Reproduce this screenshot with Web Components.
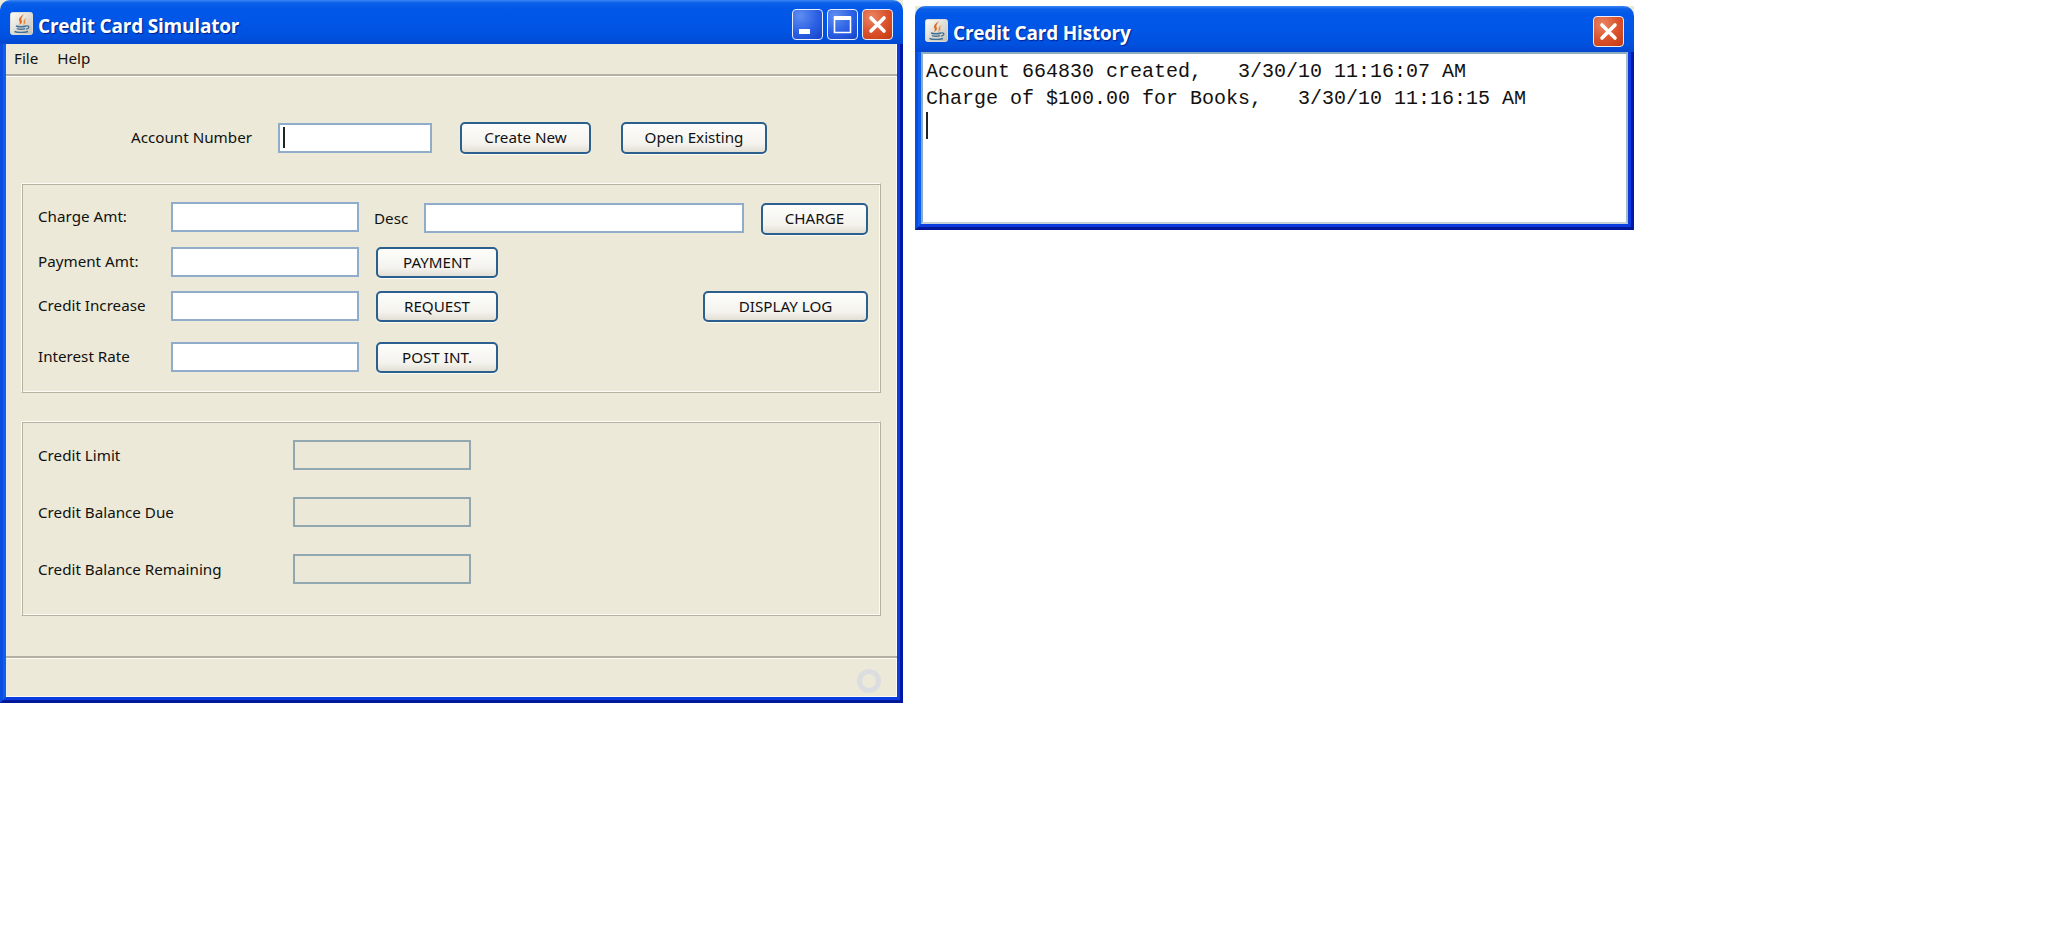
<!DOCTYPE html>
<html>
<head>
<meta charset="utf-8">
<title>Credit Card Simulator</title>
<style>
  html, body { margin: 0; height: 100%; background: #fff; }
  body { font: 15.2px "Noto Sans", "Liberation Sans", sans-serif; color: #111; }
  #simulator { left: 0; top: 0; width: 903px; height: 703px; }
  #history { left: 915px; top: 6px; width: 719px; height: 224px; }
</style>
</head>
<body>
<xp-window id="simulator" title="Credit Card Simulator" controls="all" bar="44">
  <xp-menubar><span>File</span><span>Help</span></xp-menubar>
  <account-row></account-row>
  <charge-panel></charge-panel>
  <balance-panel></balance-panel>
  <status-strip></status-strip>
</xp-window>
<xp-window id="history" title="Credit Card History" controls="close" bar="46">
  <log-view>Account 664830 created,   3/30/10 11:16:07 AM
Charge of $100.00 for Books,   3/30/10 11:16:15 AM</log-view>
</xp-window>

<script>
class JavaIcon extends HTMLElement {
  constructor() {
    super();
    this.attachShadow({ mode: "open" });
    this.shadowRoot.innerHTML = `
      <style>
        :host { display: block; width: 23px; height: 23px; flex: none; margin-top: -3px; }
        svg { display: block; }
      </style>
      <svg width="23" height="23" viewBox="0 0 23 23">
        <defs>
          <linearGradient id="bg" x1="0" y1="0" x2="1" y2="1">
            <stop offset="0" stop-color="#fdfcf8"/><stop offset="1" stop-color="#c4c1b6"/>
          </linearGradient>
        </defs>
        <rect x=".5" y=".5" width="22" height="22" rx="2" fill="url(#bg)" stroke="#dcdad0"/>
        <path d="M14 2c-3.500 2.500-6 4.500-4.500 7.500.7 1.500.2 2.500-.7 3.500 2.800-1 3.800-2.800 2.700-5C10.700 6.300 12.500 4.200 14 2z" fill="#e06a1e"/>
        <path d="M17 6c-2.500 1-4 2.500-3.300 4.300.3 1-.2 1.800-1 2.700 2.300-.8 3.200-2 2.600-3.700C14.800 8.200 15.700 7 17 6z" fill="#ee8a3c"/>
        <path d="M6 14c2.500.8 7.500.8 10 0M6.800 16.600c2 .6 6.400.6 8.400 0M4.500 19.500c3 1.200 10 1.200 13.500 0" fill="none" stroke="#3f7096" stroke-width="1.400"/>
        <path d="M16 14c3.500-1 4 2.300.2 3.200" fill="none" stroke="#3f7096" stroke-width="1.200"/>
      </svg>`;
  }
}
customElements.define("java-icon", JavaIcon);

class CaptionButton extends HTMLElement {
  constructor() {
    super();
    this.attachShadow({ mode: "open" });
  }
  connectedCallback() {
    const kind = this.getAttribute("kind");
    const glyphs = {
      min: `<rect x="7" y="20" width="11" height="5" fill="#fff"/>`,
      max: `<path d="M7.500 8.500h16v15h-16z" fill="none" stroke="#fff" stroke-width="1.600"/><rect x="7" y="7" width="17" height="4" fill="#fff"/>`,
      close: `<path d="M9 9l13 13M22 9L9 22" stroke="#fff" stroke-width="3.600" stroke-linecap="round"/>`,
    };
    this.shadowRoot.innerHTML = `
      <style>
        :host {
          display: block; width: 31px; height: 31px; box-sizing: border-box;
          border: 1.500px solid #e8eefc; border-radius: 4px; flex: none;
          background: radial-gradient(circle at 25% 20%, #5f8df0, #2a5fe4 55%, #1542c8);
        }
        :host([kind="close"]) {
          background: radial-gradient(circle at 30% 25%, #ea8464, #d9502a 55%, #c23a10);
        }
        svg { display: block; margin: -1.500px; }
      </style>
      <svg width="31" height="31" viewBox="0 0 31 31">${glyphs[kind]}</svg>`;
  }
}
customElements.define("caption-button", CaptionButton);

class XpWindow extends HTMLElement {
  constructor() {
    super();
    this.attachShadow({ mode: "open" });
  }
  connectedCallback() {
    const title = this.getAttribute("title");
    const bar = this.getAttribute("bar");
    const controls = this.getAttribute("controls") === "all"
      ? `<caption-button kind="min"></caption-button><caption-button kind="max"></caption-button><caption-button kind="close"></caption-button>`
      : `<caption-button kind="close"></caption-button>`;
    this.removeAttribute("title");
    this.shadowRoot.innerHTML = `
      <style>
        :host { position: absolute; display: flex; flex-direction: column; background: #ece9d8; }
        .bar {
          height: ${bar}px; flex: none; box-sizing: border-box; display: flex; align-items: center;
          gap: 4px; padding: 5px 10px 0 10px; border-radius: 10px 10px 0 0;
          background: linear-gradient(#3a86f4 0, #0b5fe8 3px, #0058e9 9px, #0055e5 60%, #0050de 85%, #0346d0 100%);
        }
        .name {
          flex: 1; margin-left: 1px; padding-top: 2px; color: #fff;
          font: bold 19px "Open Sans", "Liberation Sans", sans-serif;
          letter-spacing: -.2px; text-shadow: 1px 1px 1px #00208c; white-space: nowrap;
        }
        .frame {
          flex: 1; min-height: 0; display: flex; border-style: solid; border-width: 0 3px 3px 3px;
          border-color: #0a4ee0 #0018a8 #00179a #0a4ee0;
        }
        .frame-in {
          flex: 1; min-width: 0; display: flex; border-style: solid; border-width: 0 3px 3px 3px;
          border-color: #0f5ff0 #0a3ce0 #0a3ce0 #0f5ff0;
        }
        .client { flex: 1; min-width: 0; display: flex; flex-direction: column; box-shadow: inset -1px -1px 0 #fbfaf4; }
      </style>
      <div class="bar">
        <java-icon></java-icon>
        <div class="name">${title}</div>
        ${controls}
      </div>
      <div class="frame"><div class="frame-in"><div class="client"><slot></slot></div></div></div>`;
  }
}
customElements.define("xp-window", XpWindow);

class XpMenubar extends HTMLElement {
  constructor() {
    super();
    this.attachShadow({ mode: "open" });
    this.shadowRoot.innerHTML = `
      <style>
        :host {
          display: flex; height: 28px; padding: 0 0 2px 8px; align-items: center; gap: 19px;
          border-bottom: 2px solid #b4b1a2; box-shadow: 0 1px 0 #fff; flex: none;
        }
      </style>
      <slot></slot>`;
  }
}
customElements.define("xp-menubar", XpMenubar);

class XpButton extends HTMLElement {
  constructor() {
    super();
    this.attachShadow({ mode: "open" });
    this.shadowRoot.innerHTML = `
      <style>
        :host {
          display: flex; align-items: center; justify-content: center; box-sizing: border-box; flex: none;
          height: 32px; padding-bottom: 2px; border: 2px solid #2b5f8e; border-radius: 5px; color: #111;
          white-space: nowrap; background: linear-gradient(#fdfdfb, #f4f3ee 70%, #e2dfd4);
          box-shadow: 0 1px 1px #fbfaf5;
        }
      </style>
      <slot></slot>`;
  }
}
customElements.define("xp-button", XpButton);

class XpField extends HTMLElement {
  constructor() {
    super();
    this.attachShadow({ mode: "open" });
    this.shadowRoot.innerHTML = `
      <style>
        :host {
          display: block; box-sizing: border-box; height: 30px; flex: none; position: relative;
          border: 2px solid #8fadcb; background: #fff;
        }
        :host([readonly]) { background: #ebe8d8; border-color: #92a7b0; }
        :host([caret])::after {
          content: ""; position: absolute; left: 3px; top: 2px; bottom: 3px; width: 2px; background: #222;
        }
      </style>`;
  }
}
customElements.define("xp-field", XpField);

class GroupPanel extends HTMLElement {
  constructor() {
    super();
    this.attachShadow({ mode: "open" });
    this.shadowRoot.innerHTML = `
      <style>
        :host {
          display: block; box-sizing: border-box; width: 860px; margin-left: 15px; flex: none;
          border: 1px solid; border-color: #fbfaf5 #b5b2a3 #b5b2a3 #fbfaf5;
          box-shadow: inset 1px 1px 0 #b5b2a3, inset -1px -1px 0 #fbfaf5;
        }
      </style>
      <slot></slot>`;
  }
}
customElements.define("group-panel", GroupPanel);

class AccountRow extends HTMLElement {
  constructor() {
    super();
    this.attachShadow({ mode: "open" });
    this.shadowRoot.innerHTML = `
      <style>
        :host { display: flex; align-items: center; padding: 46px 0 0 125px; height: 32px; flex: none; }
        .label { width: 147px; padding-bottom: 2px; }
        xp-field { width: 154px; margin-right: 28px; }
        .create { width: 131px; margin-right: 30px; }
        .open { width: 146px; }
      </style>
      <span class="label">Account Number</span>
      <xp-field caret></xp-field>
      <xp-button class="create">Create New</xp-button>
      <xp-button class="open">Open Existing</xp-button>`;
  }
}
customElements.define("account-row", AccountRow);

class ChargePanel extends HTMLElement {
  constructor() {
    super();
    this.attachShadow({ mode: "open" });
    this.shadowRoot.innerHTML = `
      <style>
        :host { display: block; margin-top: 29px; flex: none; }
        group-panel { height: 210px; }
        .grid {
          display: grid; height: 100%; box-sizing: border-box; padding: 18px 13px 0 16px;
          grid-template-rows: 45px 44px 51px 31px;
        }
        .row { display: flex; align-items: flex-start; }
        .label { width: 133px; height: 30px; line-height: 29px; flex: none; }
        .amt { width: 188px; }
        .action { width: 122px; height: 31px; margin-left: 17px; }
        .desc { margin: 1px 0 0 15px; width: 50px; line-height: 30px; }
        .desc-input { width: 320px; margin-top: 1px; }
        .charge { width: 107px; margin: 1px 0 0 17px; }
        .log { width: 165px; height: 31px; margin-left: auto; }
      </style>
      <group-panel>
        <div class="grid">
          <div class="row">
            <span class="label">Charge Amt:</span><xp-field class="amt"></xp-field>
            <span class="desc">Desc</span><xp-field class="desc-input"></xp-field>
            <xp-button class="charge">CHARGE</xp-button>
          </div>
          <div class="row">
            <span class="label">Payment Amt:</span><xp-field class="amt"></xp-field>
            <xp-button class="action">PAYMENT</xp-button>
          </div>
          <div class="row">
            <span class="label">Credit Increase</span><xp-field class="amt"></xp-field>
            <xp-button class="action">REQUEST</xp-button>
            <xp-button class="log">DISPLAY LOG</xp-button>
          </div>
          <div class="row">
            <span class="label">Interest Rate</span><xp-field class="amt"></xp-field>
            <xp-button class="action">POST INT.</xp-button>
          </div>
        </div>
      </group-panel>`;
  }
}
customElements.define("charge-panel", ChargePanel);

class BalancePanel extends HTMLElement {
  constructor() {
    super();
    this.attachShadow({ mode: "open" });
    this.shadowRoot.innerHTML = `
      <style>
        :host { display: block; margin-top: 28px; flex: none; }
        group-panel { height: 195px; }
        .rows {
          display: grid; grid-auto-rows: 30px; row-gap: 27px; padding: 18px 0 0 16px;
        }
        .row { display: flex; align-items: center; }
        .label { width: 255px; flex: none; }
        xp-field { width: 178px; }
      </style>
      <group-panel>
        <div class="rows">
          <div class="row"><span class="label">Credit Limit</span><xp-field readonly></xp-field></div>
          <div class="row"><span class="label">Credit Balance Due</span><xp-field readonly></xp-field></div>
          <div class="row"><span class="label">Credit Balance Remaining</span><xp-field readonly></xp-field></div>
        </div>
      </group-panel>`;
  }
}
customElements.define("balance-panel", BalancePanel);

class StatusStrip extends HTMLElement {
  constructor() {
    super();
    this.attachShadow({ mode: "open" });
    this.shadowRoot.innerHTML = `
      <style>
        :host {
          display: flex; flex: 1; align-items: center; justify-content: flex-end; margin-top: 40px;
          padding: 6px 16px 0 0; border-top: 2px solid #b4b1a2; box-shadow: inset 0 1px 0 #fbfaf5;
        }
        .busy {
          width: 24px; height: 24px; box-sizing: border-box; border-radius: 50%;
          border: 5px solid #dcdde0;
        }
      </style>
      <div class="busy"></div>`;
  }
}
customElements.define("status-strip", StatusStrip);

class LogView extends HTMLElement {
  constructor() {
    super();
    this.attachShadow({ mode: "open" });
    this.shadowRoot.innerHTML = `
      <style>
        :host {
          display: block; flex: 1; background: #fff; overflow: hidden; box-sizing: border-box;
          padding: 4px 0 0 3px; border: 2px solid #8eabc0; border-bottom-color: #c6d2da; border-right-color: #a8bcc9;
          font: 20px/27px "Liberation Mono", monospace; color: #111;
        }
        slot { display: block; white-space: pre; }
        .caret { width: 2px; height: 27px; background: #222; }
      </style>
      <slot></slot>
      <div class="caret"></div>`;
  }
}
customElements.define("log-view", LogView);
</script>
</body>
</html>
